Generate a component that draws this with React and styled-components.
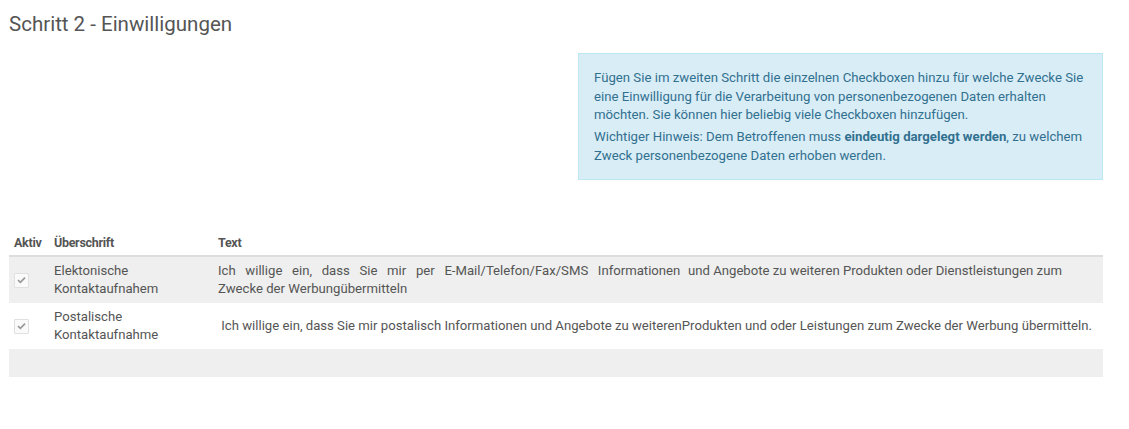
import React from 'react'
import styled, { createGlobalStyle } from 'styled-components'

const GlobalStyle = createGlobalStyle`
  body {
    margin: 0;
    background: #fff;
    font-family: Roboto, "Liberation Sans", sans-serif;
    color: #555;
  }
`

const Page = styled.div`
  padding: 12px 26px 40px 9px;
`

const Title = styled.h2`
  margin: 0;
  font-size: 20.5px;
  font-weight: 400;
  color: #555;
  line-height: 24px;
`

const InfoRow = styled.div`
  display: flex;
  justify-content: flex-end;
  margin-top: 17px;
`

const InfoBox = styled.div`
  width: 493px;
  padding: 15px 15px 13px 15px;
  background: #d9edf7;
  border: 1px solid #bce8f1;
  color: #31708f;
  font-size: 13.2px;
  line-height: 18.7px;

  p {
    margin: 0 0 3px;
  }
  p:last-child {
    margin-bottom: 0;
  }
  b {
    font-weight: 700;
  }
`

const Table = styled.table`
  width: 100%;
  margin-top: 52px;
  border-collapse: collapse;
  font-size: 13.15px;
  color: #555;
`

const Th = styled.th`
  text-align: left;
  font-weight: 700;
  font-size: 12.5px;
  letter-spacing: -0.3px;
  padding: 3px 5px 4px;
  line-height: 16px;
  border-bottom: 2px solid #ddd;
  width: ${p => p.w || 'auto'};
`

const Tr = styled.tr`
  background: ${p => (p.shaded ? '#eeefee' : '#fff')};
`

const Td = styled.td`
  padding: 5px 5px 5px;
  line-height: 18px;
  vertical-align: middle;
`

const Wide = styled.span`
  word-spacing: 6.4px;
  margin-right: 4.4px;
`

const FootCell = styled.td`
  height: 28px;
  padding: 0;
`

const Check = styled.span`
  display: inline-flex;
  align-items: center;
  justify-content: center;
  width: 13px;
  height: 13px;
  border: 1px solid #e0e0e0;
  background: #fafafa;
  border-radius: 1px;
  vertical-align: middle;
`

const CheckIcon = () => (
  <Check>
    <svg width="9" height="8" viewBox="0 0 9 8">
      <path d="M1 4.2 L3.4 6.4 L8 1.6" fill="none" stroke="#999" strokeWidth="1.7" />
    </svg>
  </Check>
)

const rows = [
  {
    title: ['Elektonische', 'Kontaktaufnahem'],
    wide: 'Ich willige ein, dass Sie mir per E-Mail/Telefon/Fax/SMS Informationen',
    text: ' und Angebote zu weiteren Produkten oder Dienstleistungen zum Zwecke der Werbungübermitteln',
  },
  {
    title: ['Postalische', 'Kontaktaufnahme'],
    text: '\u00a0Ich willige ein, dass Sie mir postalisch Informationen und Angebote zu weiterenProdukten und oder Leistungen zum Zwecke der Werbung übermitteln.',
  },
]

export default function App() {
  return (
    <>
      <GlobalStyle />
      <Page>
        <Title>Schritt 2 - Einwilligungen</Title>
        <InfoRow>
          <InfoBox>
            <p>
              Fügen Sie im zweiten Schritt die einzelnen Checkboxen hinzu für welche Zwecke Sie
              eine Einwilligung für die Verarbeitung von personenbezogenen Daten erhalten
              möchten. Sie können hier beliebig viele Checkboxen hinzufügen.
            </p>
            <p>
              Wichtiger Hinweis: Dem Betroffenen muss <b>eindeutig dargelegt werden</b>, zu welchem
              Zweck personenbezogene Daten erhoben werden.
            </p>
          </InfoBox>
        </InfoRow>
        <Table>
          <thead>
            <tr>
              <Th w="30px">Aktiv</Th>
              <Th w="154px">Überschrift</Th>
              <Th>Text</Th>
            </tr>
          </thead>
          <tbody>
            {rows.map((r, i) => (
              <Tr key={i} shaded={i % 2 === 0}>
                <Td><CheckIcon /></Td>
                <Td>{r.title[0]}<br />{r.title[1]}</Td>
                <Td>
                  {r.wide && <Wide>{r.wide}</Wide>}
                  {r.text}
                </Td>
              </Tr>
            ))}
            <Tr shaded>
              <FootCell colSpan={3} />
            </Tr>
          </tbody>
        </Table>
      </Page>
    </>
  )
}
